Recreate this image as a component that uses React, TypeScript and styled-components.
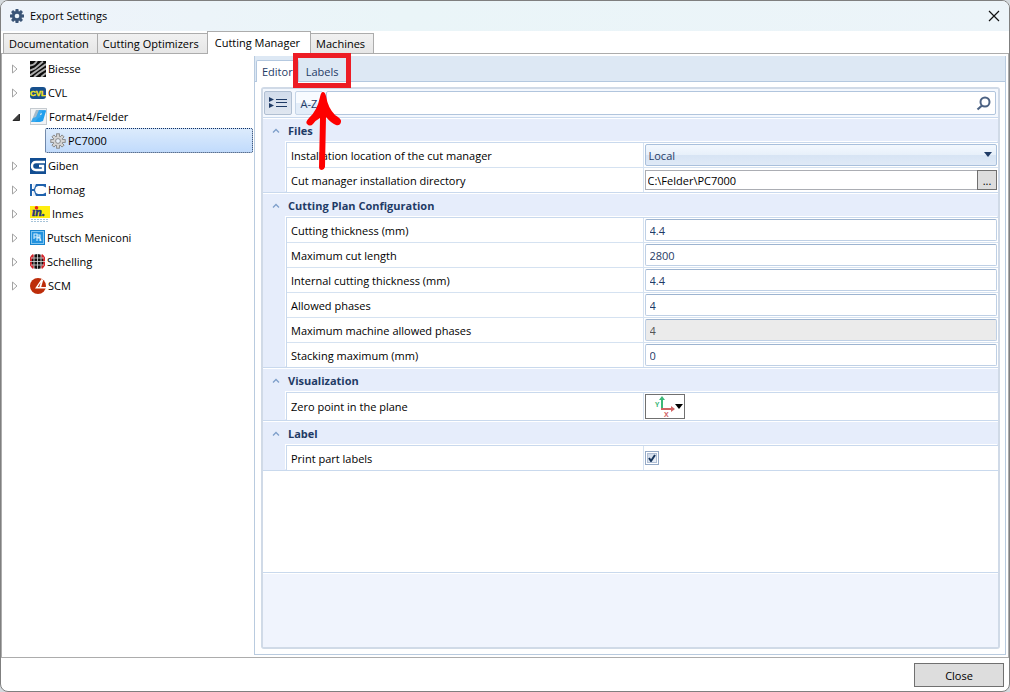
import React, { useState } from "react";
import styled, { createGlobalStyle, css } from "styled-components";

const line = "#c9d9ed";
const navy = "#1f3b66";

const GlobalStyle = createGlobalStyle`
  *, *::before, *::after { box-sizing: border-box; }
  body { margin: 0; background: #d5dade; }
  body, button, input, select { font-family: "Open Sans", "Noto Sans", sans-serif; font-size: 11px; }
  button, input, select { margin: 0; padding: 0; color: inherit; border-radius: 0; }
  ul { list-style: none; margin: 0; padding: 0; }
`;

const Window = styled.div`
  display: flex;
  flex-direction: column;
  min-height: 100vh;
  border: 1px solid #7f7f7f;
  border-radius: 8px;
  overflow: hidden;
  background: #fff;
  color: #000;
  line-height: 16px;
`;

const TitleBar = styled.header`
  display: flex;
  align-items: center;
  gap: 5px;
  height: 30px;
  padding: 0 9px 0 8px;
  background: linear-gradient(90deg, #eef3fa, #eaf5f8 40%, #ecf4f9);
`;

const Title = styled.h1`
  flex: 1;
  margin: 0;
  font-size: 11px;
  font-weight: 400;
`;

const PlainButton = styled.button`
  display: grid;
  place-items: center;
  border: 0;
  background: none;
`;

const MainTabs = styled.div`
  display: flex;
  align-items: flex-end;
  height: 22px;
  padding-left: 2px;
`;

const MainTab = styled.button<{ $active: boolean }>`
  height: 20px;
  margin-right: -1px;
  padding: 0 8px 0 5px;
  border: 1px solid #acacac;
  border-bottom: 0;
  background: linear-gradient(#f1f1f1, #e6e6e6);
  text-align: left;
  white-space: nowrap;
  ${(p) =>
    p.$active &&
    css`
      position: relative;
      height: 23px;
      margin-bottom: -1px;
      padding: 0 10px 2px 7px;
      background: #fff;
    `}
`;

const Content = styled.main`
  display: flex;
  flex: 1;
  gap: 1px;
  padding: 2px 2px 2px 0;
  border: 1px solid #acacac;
`;

const Tree = styled.ul`
  flex: 0 0 251px;
`;

const TreeLine = styled.div`
  display: flex;
  align-items: center;
  height: 24px;
  padding: 1px 0 0 7px;
`;

const Expander = styled(PlainButton)`
  width: 12px;
  height: 16px;
  margin-right: 9px;
`;

const TreeLabel = styled(PlainButton)`
  display: flex;
  align-items: center;
  gap: 2px;
  white-space: nowrap;
`;

const SelectedLabel = styled(TreeLabel)`
  width: calc(100% - 43px);
  height: 25px;
  margin-left: 43px;
  padding-left: 4px;
  border: 1px dotted #14305c;
  border-radius: 2px;
  background: linear-gradient(#dcebfc, #c1dbfc);
`;

const Panel = styled.section`
  display: flex;
  flex: 1;
  flex-direction: column;
  min-width: 0;
  border: 1px solid #b9cbdf;
  border-top: 0;
`;

const PanelTabs = styled.div`
  display: flex;
  align-items: flex-end;
  height: 26px;
  padding-left: 1px;
  border-bottom: 1px solid #b4c8df;
  background: #dde8f4;
`;

const PanelTab = styled.button<{ $active: boolean }>`
  position: relative;
  height: 21px;
  padding: 0 5px;
  border: 1px solid transparent;
  border-bottom: 0;
  background: none;
  color: ${navy};
  ${(p) =>
    p.$active
      ? css`
          height: 22px;
          margin-bottom: -1px;
          border-color: #b4c8df;
          border-radius: 2px 2px 0 0;
          background: #fff;
        `
      : css`
          margin-left: 1px;
        `}
`;

const Highlight = styled.span`
  position: absolute;
  z-index: 2;
  top: -8px;
  left: 50%;
  width: 58px;
  height: 35px;
  margin-left: -29px;
  border: 5px solid #ed1c24;
  pointer-events: none;
`;

const Arrow = styled.svg`
  position: absolute;
  top: 33px;
  left: 6px;
  overflow: visible;
`;

const Grid = styled.div`
  display: flex;
  flex: 1;
  flex-direction: column;
  margin: 5px 5px 5px 6px;
  border: 2px solid #d0dae7;
  border-radius: 3px;
`;

const Toolbar = styled.div`
  display: flex;
  gap: 3px;
  padding: 2px 2px 2px 1px;
  height: 29px;
  border-bottom: 1px solid ${line};
  background: #f4f8fe;
`;

const ToolButton = styled.button<{ $pressed?: boolean }>`
  display: grid;
  place-items: center;
  width: 28px;
  height: 24px;
  border: 1px solid ${(p) => (p.$pressed ? "#b0bfd2" : "#c5d5e8")};
  border-radius: 2px;
  background: ${(p) => (p.$pressed ? "linear-gradient(#d2dceb, #dfe6f0)" : "linear-gradient(#f8fbff 50%, #e3edf9 50%)")};
  color: ${navy};
`;

const Search = styled.label`
  display: flex;
  flex: 1;
  align-items: center;
  height: 24px;
  padding-right: 4px;
  border: 1px solid #b1c5dd;
  border-radius: 2px;
  background: #fff;
`;

const SearchInput = styled.input`
  flex: 1;
  border: 0;
  outline: 0;
  background: none;
`;

const Category = styled.section`
  border-bottom: 1px solid ${line};
  background: #e6edfb;
  box-shadow: inset 0 1px #fff;
`;

const CategoryHead = styled.h2`
  display: flex;
  align-items: center;
  gap: 8px;
  height: 24px;
  margin: 0;
  padding: 2px 0 0 9px;
  color: ${navy};
  font-size: 11px;
  font-weight: 700;
`;

const Rows = styled.div`
  margin-left: 23px;
  border: 1px solid ${line};
  border-width: 1px 0 0 1px;
  background: #fff;
  box-shadow: -1px -1px #fff;
`;

const Row = styled.div<{ $tall?: boolean }>`
  display: grid;
  grid-template-columns: minmax(0, 1fr) minmax(0, 1fr);
  height: ${(p) => (p.$tall ? 28 : 25)}px;
  border-bottom: 1px solid #d5e2f1;
  &:last-child {
    height: ${(p) => (p.$tall ? 27 : 24)}px;
    border-bottom: 0;
  }
`;

const Name = styled.label`
  align-self: center;
  padding: 1px 0 0 4px;
`;

const Value = styled.div`
  display: flex;
  align-items: center;
  padding: 0 1px;
  border-left: 1px solid #d5e2f1;
`;

const Field = styled.input`
  width: 100%;
  height: 22px;
  padding: 1px 4px 0;
  border: 1px solid #bfd0e5;
  border-top-color: #9db4d0;
  border-radius: 2px;
  background: #fff;
  color: ${navy};
  &:disabled {
    background: #ebebeb;
    color: #555;
  }
`;

const SelectBox = styled.div`
  position: relative;
  width: 100%;
  height: 22px;
`;

const Select = styled.select`
  width: 100%;
  height: 22px;
  padding: 1px 3px 0;
  appearance: none;
  border: 1px solid #a9c0dc;
  border-radius: 2px;
  background: linear-gradient(#f3f8fe, #e7f0fa 50%, #d7e4f4 51%, #dfe9f7);
  color: ${navy};
`;

const SelectMark = styled.svg`
  position: absolute;
  top: 8px;
  right: 5px;
  pointer-events: none;
`;

const PathInput = styled.input`
  flex: 1;
  height: 20px;
  padding: 0 2px;
  border: 1px solid #abadb3;
  border-right: 0;
`;

const Browse = styled.button`
  width: 20px;
  height: 20px;
  border: 1px solid #707070;
  background: #ddd;
`;

const OriginButton = styled.button`
  display: block;
  width: 40px;
  height: 25px;
  border: 1px solid #707070;
  background: #fff;
`;

const Check = styled.input`
  width: 14px;
  height: 14px;
  appearance: none;
  border: 1px solid #94a9c6;
  background: linear-gradient(135deg, #c3d0e3, #f5f8fc);
  box-shadow: inset 0 0 0 1px #fff, inset 0 0 0 2px #b0bfd5;
  &:checked {
    background: url("data:image/svg+xml,%3Csvg xmlns='http://www.w3.org/2000/svg' viewBox='0 0 12 12'%3E%3Cpath d='M3 6l2 3 4-6' fill='none' stroke='%2317365d' stroke-width='2'/%3E%3C/svg%3E"),
      linear-gradient(135deg, #c3d0e3, #f5f8fc);
  }
`;

const Blank = styled.div`
  flex: 1;
  min-height: 40px;
`;

const Description = styled.div`
  height: 75px;
  border-top: 1px solid ${line};
  background: #f0f4fd;
  box-shadow: inset 0 1px #fff;
`;

const Footer = styled.footer`
  display: flex;
  justify-content: flex-end;
  padding: 5px 5px 4px;
`;

const CloseButton = styled.button`
  width: 90px;
  height: 24px;
  border: 1px solid #707070;
  background: #ddd;
`;

function TitleGear() {
  return (
    <svg width="16" height="16" viewBox="0 0 16 16" aria-hidden="true">
      {[0, 45, 90, 135].map((a) => (
        <path key={a} d="M6.6 1H9.4L9.8 4V12L9.4 15H6.6L6.2 12V4Z" fill="#3b5577" transform={`rotate(${a} 8 8)`} />
      ))}
      <circle cx="8" cy="8" r="4.8" fill="#3b5577" />
      <circle cx="8" cy="8" r="2.3" fill="#edf4f9" />
    </svg>
  );
}

function MachineGear() {
  return (
    <svg width="16" height="16" viewBox="0 0 16 16" aria-hidden="true">
      {[0, 45, 90, 135].map((a) => (
        <rect key={a} x="6.6" y="0.8" width="2.8" height="14.4" fill="#d4d4d4" stroke="#858585" strokeWidth="0.9" transform={`rotate(${a} 8 8)`} />
      ))}
      <circle cx="8" cy="8" r="5" fill="#d4d4d4" stroke="#858585" strokeWidth="0.9" />
      {[0, 45, 90, 135].map((a) => (
        <rect key={a} x="7" y="2" width="2" height="12" fill="#d4d4d4" transform={`rotate(${a} 8 8)`} />
      ))}
      <circle cx="8" cy="8" r="2.4" fill="#e8f1fc" stroke="#858585" strokeWidth="0.9" />
    </svg>
  );
}

const logos: Record<string, React.ReactNode> = {
  Biesse: (
    <svg width="16" height="16" aria-hidden="true">
      <rect width="16" height="16" fill="#0b0b0b" />
      <g fill="none" stroke="#adadad" strokeWidth="1.9">
        <path d="M0 4.5Q4 4.5 7 0M0 9.5L5 7.5L13 0.5M0 14.5L7 9.5L16 3M4 16L9 12L16 7.5M11 16L16 12" />
      </g>
    </svg>
  ),
  CVL: (
    <svg width="16" height="16" aria-hidden="true">
      <rect y="2" width="16" height="12" rx="3" fill="#17508d" />
      <text x="8" y="11" textAnchor="middle" fontSize="8" fontWeight="700" fontFamily="Liberation Sans, sans-serif" fill="#f5e51b" stroke="#f5e51b" strokeWidth="0.4">CVL</text>
    </svg>
  ),
  "Format4/Felder": (
    <svg width="17" height="17" aria-hidden="true">
      <rect x="0.5" y="0.5" width="16" height="16" fill="#f1f3f5" stroke="#c5cbd0" />
      <path d="M6 2H11L6 14H1Z" fill="#a6bccb" />
      <path d="M9 2H16L15 5H11L10 7H14L13 10H9L6 14H1L3 10L6 9Z" fill="#3aa9ee" />
      <path d="M12 3H16L13 13L10 14H5L8 10L11 9Z" fill="#21a0ee" />
    </svg>
  ),
  Giben: (
    <svg width="16" height="16" aria-hidden="true">
      <rect width="16" height="16" fill="#124e92" />
      <path d="M15 4H6Q2 4 2 8T6 12H13V8H9" fill="none" stroke="#fff" strokeWidth="2.4" />
    </svg>
  ),
  Homag: (
    <svg width="16" height="16" aria-hidden="true">
      <path d="M0 2H2V14H0ZM3 2H16V14H3V9H2V7H3Z" fill="#1f62ad" />
      <path d="M6 5L8 4H13L16 5.5V10.5L13 12H8L6 11L5 8Z" fill="#fff" />
      <path d="M3 2H6L4 7H3ZM3 14H6L4 9H3Z" fill="#e6effa" />
    </svg>
  ),
  Inmes: (
    <svg width="20" height="16" overflow="visible" aria-hidden="true">
      <rect width="20" height="12" fill="#ffee10" />
      <text x="2" y="10" fontSize="12" fontWeight="700" fontStyle="italic" fontFamily="Liberation Serif, serif" fill="#25367e" stroke="#25367e" strokeWidth="0.5">ın.</text>
      <circle cx="6.5" cy="1.8" r="1.8" fill="#e52620" />
      <path d="M1 13.5H19M1 15.5H19" stroke="#a8c4d9" strokeDasharray="2 1" />
    </svg>
  ),
  "Putsch Meniconi": (
    <svg width="15" height="16" aria-hidden="true">
      <rect width="15" height="15" fill="#1583cf" />
      <rect x="1.5" y="1.5" width="12" height="12" fill="#2292df" stroke="#80c5f0" />
      <path d="M4 9V4H7V7H4M7 5H10V7H7M7 11V8H10L11 11M10 8V11" fill="none" stroke="#d3edfb" strokeWidth="1.1" />
    </svg>
  ),
  Schelling: (
    <svg width="15" height="16" aria-hidden="true">
      <circle cx="7.5" cy="7.5" r="7.4" fill="#111" />
      <path d="M3.7 1A8 8 0 0 0 3.7 14M11.3 1A8 8 0 0 1 11.3 14" fill="none" stroke="#d4262c" strokeWidth="2.5" />
      <path d="M4 1V14M7.5 0V15M11 1V14M1 4H14M0 7.5H15M1 11H14" stroke="#ddd" strokeWidth="0.8" />
    </svg>
  ),
  SCM: (
    <svg width="16" height="16" aria-hidden="true">
      <circle cx="8" cy="8" r="8" fill="#bd2d0a" />
      <path d="M11.5 1L5 10.5H16V9H11.2L13.2 2Z" fill="#fff" />
      <path d="M10.5 4.5L7.8 9H9.4Z" fill="#bd2d0a" />
    </svg>
  ),
};

const machines = Object.keys(logos);

function ExpandMark({ open }: { open: boolean }) {
  return (
    <svg width="12" height="12" aria-hidden="true">
      {open ? (
        <path d="M10.5 3V9.5H4Z" fill="#404040" stroke="#262626" />
      ) : (
        <path d="M3.5 2L8 6L3.5 10Z" fill="#fff" stroke="#a3a3a3" />
      )}
    </svg>
  );
}

function CategoryBlock({ title, children }: { title: string; children: React.ReactNode }) {
  return (
    <Category>
      <CategoryHead>
        <svg width="8" height="6" aria-hidden="true">
          <path d="M1 4.5L4 1.5L7 4.5" fill="none" stroke="#7e9fca" strokeWidth="1.3" />
        </svg>
        {title}
      </CategoryHead>
      <Rows>{children}</Rows>
    </Category>
  );
}

const planFields = [
  { id: "thickness", name: "Cutting thickness (mm)", value: "4.4" },
  { id: "length", name: "Maximum cut length", value: "2800" },
  { id: "internal", name: "Internal cutting thickness (mm)", value: "4.4" },
  { id: "phases", name: "Allowed phases", value: "4" },
  { id: "machine-phases", name: "Maximum machine allowed phases", value: "4", disabled: true },
  { id: "stacking", name: "Stacking maximum (mm)", value: "0" },
];

const mainTabs = ["Documentation", "Cutting Optimizers", "Cutting Manager", "Machines"];

export default function App() {
  const [printLabels, setPrintLabels] = useState(true);
  return (
    <>
      <GlobalStyle />
      <Window>
        <TitleBar>
          <TitleGear />
          <Title>Export Settings</Title>
          <PlainButton aria-label="Close window">
            <svg width="12" height="12" aria-hidden="true">
              <path d="M1 1L11 11M11 1L1 11" stroke="#111" strokeWidth="1.2" />
            </svg>
          </PlainButton>
        </TitleBar>
        <MainTabs role="tablist">
          {mainTabs.map((t) => (
            <MainTab key={t} role="tab" aria-selected={t === "Cutting Manager"} $active={t === "Cutting Manager"}>
              {t}
            </MainTab>
          ))}
        </MainTabs>
        <Content>
          <Tree>
            {machines.map((m) => (
              <li key={m}>
                <TreeLine>
                  <Expander aria-label={`Toggle ${m}`}>
                    <ExpandMark open={m === "Format4/Felder"} />
                  </Expander>
                  <TreeLabel>
                    {logos[m]}
                    {m}
                  </TreeLabel>
                </TreeLine>
                {m === "Format4/Felder" && (
                  <SelectedLabel>
                    <MachineGear />
                    PC7000
                  </SelectedLabel>
                )}
              </li>
            ))}
          </Tree>
          <Panel>
            <PanelTabs role="tablist">
              <PanelTab role="tab" aria-selected $active>
                Editor
              </PanelTab>
              <PanelTab role="tab" aria-selected={false} $active={false}>
                Labels
                <Highlight>
                  <Arrow width="40" height="80" aria-hidden="true">
                    <path
                      d="M19 1Q21 1 22 5Q24 17 31 24Q38 28 37 31Q36 35 32 34Q27 32 22 26L21 76Q20 79 18 79Q15 79 15 76L16 27Q12 29 9 33Q6 36 3 33Q1 31 5 27Q13 20 16 6Q17 1 19 1Z"
                      fill="#fe0000"
                    />
                  </Arrow>
                </Highlight>
              </PanelTab>
            </PanelTabs>
            <Grid>
              <Toolbar>
                <ToolButton $pressed aria-label="Group by category">
                  <svg width="18" height="12" aria-hidden="true">
                    <path d="M0 0L5 2.5L0 5ZM0 6L5 8.5L0 11Z" fill={navy} />
                    <path d="M7 2.5H18M7 5.5H18M7 9.5H18" stroke={navy} />
                  </svg>
                </ToolButton>
                <ToolButton>A-Z</ToolButton>
                <Search>
                  <SearchInput aria-label="Search" />
                  <svg width="15" height="15" aria-hidden="true">
                    <circle cx="9" cy="6" r="4.5" fill="none" stroke="#4c6283" strokeWidth="2" />
                    <path d="M6 9.5L1.5 13.5" stroke="#4c6283" strokeWidth="2.2" />
                  </svg>
                </Search>
              </Toolbar>
              <CategoryBlock title="Files">
                <Row>
                  <Name htmlFor="location">Installation location of the cut manager</Name>
                  <Value>
                    <SelectBox>
                      <Select id="location" defaultValue="Local">
                        <option>Local</option>
                      </Select>
                      <SelectMark width="8" height="5" aria-hidden="true">
                        <path d="M0 0H8L4 5Z" fill={navy} />
                      </SelectMark>
                    </SelectBox>
                  </Value>
                </Row>
                <Row>
                  <Name htmlFor="directory">Cut manager installation directory</Name>
                  <Value>
                    <PathInput id="directory" defaultValue="C:\Felder\PC7000" />
                    <Browse aria-label="Browse">...</Browse>
                  </Value>
                </Row>
              </CategoryBlock>
              <CategoryBlock title="Cutting Plan Configuration">
                {planFields.map((f) => (
                  <Row key={f.id}>
                    <Name htmlFor={f.id}>{f.name}</Name>
                    <Value>
                      <Field id={f.id} defaultValue={f.value} disabled={f.disabled} />
                    </Value>
                  </Row>
                ))}
              </CategoryBlock>
              <CategoryBlock title="Visualization">
                <Row $tall>
                  <Name htmlFor="origin">Zero point in the plane</Name>
                  <Value>
                    <OriginButton id="origin">
                      <svg width="38" height="23" aria-hidden="true">
                        <path d="M16 15V4" stroke="#3cb878" strokeWidth="2" />
                        <path d="M13 5L16 1L19 5Z" fill="#3cb878" />
                        <path d="M15 14H27" stroke="#d16464" strokeWidth="2" />
                        <path d="M25 11L29 14L25 17Z" fill="#d16464" />
                        <text x="9" y="12" fontSize="7" fontWeight="700" fill="#3cb878">Y</text>
                        <text x="18" y="22" fontSize="7" fontWeight="700" fill="#d16464">X</text>
                        <path d="M29 9H37L33 14Z" fill="#000" />
                      </svg>
                    </OriginButton>
                  </Value>
                </Row>
              </CategoryBlock>
              <CategoryBlock title="Label">
                <Row>
                  <Name htmlFor="print-labels">Print part labels</Name>
                  <Value>
                    <Check id="print-labels" type="checkbox" checked={printLabels} onChange={(e) => setPrintLabels(e.target.checked)} />
                  </Value>
                </Row>
              </CategoryBlock>
              <Blank />
              <Description />
            </Grid>
          </Panel>
        </Content>
        <Footer>
          <CloseButton>Close</CloseButton>
        </Footer>
      </Window>
    </>
  );
}
